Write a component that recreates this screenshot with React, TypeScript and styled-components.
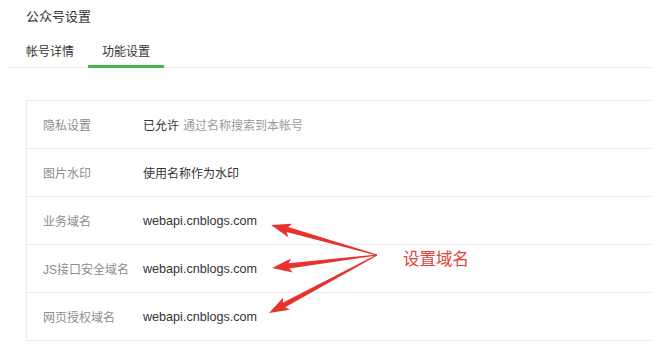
import React from 'react'
import styled, { createGlobalStyle } from 'styled-components'

const GlobalStyle = createGlobalStyle`
  html, body {
    margin: 0;
    padding: 0;
    background: #fff;
  }
  body {
    font-family: "Liberation Sans", "Noto Sans CJK SC", sans-serif;
    color: #353535;
  }
`

const rows = [
  { label: '隐私设置', value: '已允许', desc: '通过名称搜索到本帐号' },
  { label: '图片水印', value: '使用名称作为水印' },
  { label: '业务域名', value: 'webapi.cnblogs.com', domain: true },
  { label: 'JS接口安全域名', value: 'webapi.cnblogs.com', domain: true },
  { label: '网页授权域名', value: 'webapi.cnblogs.com', domain: true }
]

// tail of all arrows, and their tips
const tail = { x: 377, y: 255 }
const tips = [
  { x: 271, y: 225 },
  { x: 272, y: 268 },
  { x: 269, y: 313 }
]

function arrowPoints (tip: { x: number, y: number }) {
  const dx = tip.x - tail.x
  const dy = tip.y - tail.y
  const len = Math.sqrt(dx * dx + dy * dy)
  const ux = dx / len
  const uy = dy / len
  const nx = -uy
  const ny = ux
  const headLen = 17
  const bx = tip.x - ux * headLen
  const by = tip.y - uy * headLen
  // barbs swept back a little
  const sx = bx - ux * 3
  const sy = by - uy * 3
  const pts = [
    [tail.x + nx * 0.4, tail.y + ny * 0.4],
    [bx + nx * 2.6, by + ny * 2.6],
    [sx + nx * 7, sy + ny * 7],
    [tip.x, tip.y],
    [sx - nx * 7, sy - ny * 7],
    [bx - nx * 2.6, by - ny * 2.6],
    [tail.x - nx * 0.4, tail.y - ny * 0.4]
  ]
  return pts.map(p => p[0].toFixed(1) + ',' + p[1].toFixed(1)).join(' ')
}

export default function App () {
  return (
    <Page>
      <GlobalStyle />
      <Title>公众号设置</Title>
      <TabBar>
        <Tab>帐号详情</Tab>
        <Tab active>功能设置</Tab>
      </TabBar>
      <Table>
        {rows.map((r, i) => (
          <Row key={i}>
            <Label>{r.label}</Label>
            <Value domain={r.domain}>
              {r.value}
              {r.desc && <Desc>{r.desc}</Desc>}
            </Value>
          </Row>
        ))}
      </Table>
      <Arrows width='670' height='353' viewBox='0 0 670 353'>
        {tips.map((t, i) => (
          <polygon key={i} points={arrowPoints(t)} fill='#e8322e' />
        ))}
      </Arrows>
      <Note>设置域名</Note>
    </Page>
  )
}

const Page = styled.div`
  position: relative;
  width: 670px;
  height: 353px;
  overflow: hidden;
  background: #fff;
`

const Title = styled.h1`
  margin: 0;
  padding: 8px 0 8px 26px;
  font-size: 13px;
  line-height: 18px;
  font-weight: 400;
  color: #353535;
`

const TabBar = styled.div`
  display: flex;
  width: 640px;
  margin-left: 8px;
  padding-left: 4px;
  border-bottom: 1px solid #ebebeb;
`

const Tab = styled.div<{ active?: boolean }>`
  padding: 9px 14px 4px;
  margin-bottom: -1px;
  font-size: 12px;
  line-height: 18px;
  color: #353535;
  border-bottom: 3px solid ${p => (p.active ? '#44b549' : 'transparent')};
`

const Table = styled.div`
  margin: 32px 0 0 26px;
  width: 625px;
  border-top: 1px solid #ebebeb;
  border-left: 1px solid #ebebeb;
`

const Row = styled.div`
  display: flex;
  align-items: center;
  height: 47px;
  padding-left: 16px;
  border-bottom: 1px solid #ebebeb;
`

const Label = styled.div`
  width: 100px;
  flex-shrink: 0;
  font-size: 12px;
  color: #8d8d8d;
`

const Value = styled.div<{ domain?: boolean }>`
  font-size: ${p => (p.domain ? '12.6px' : '12px')};
  color: #353535;
`

const Desc = styled.span`
  margin-left: 4px;
  color: #9a9a9a;
`

const Arrows = styled.svg`
  position: absolute;
  left: 0;
  top: 0;
  pointer-events: none;
`

const Note = styled.div`
  position: absolute;
  left: 403px;
  top: 248px;
  font-size: 16.5px;
  line-height: 22px;
  color: #e4413b;
`
